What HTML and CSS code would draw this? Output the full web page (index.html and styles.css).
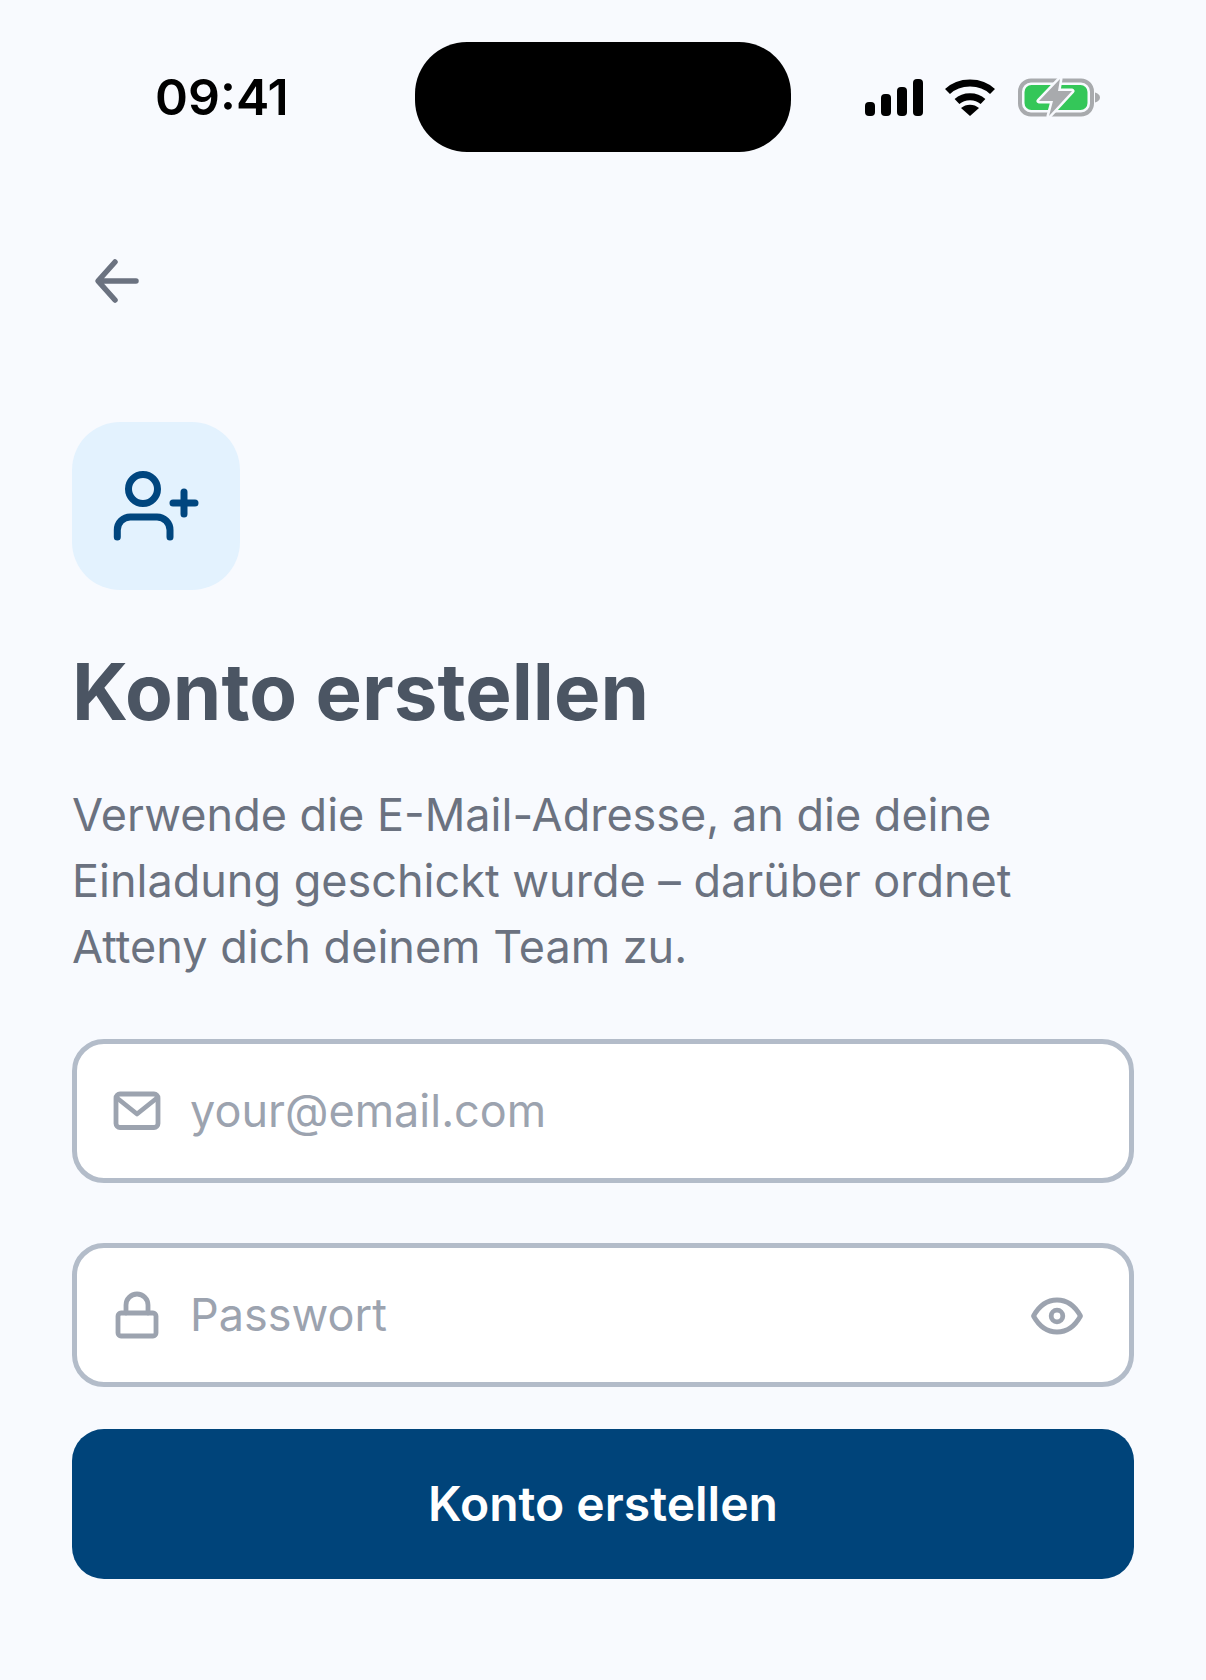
FILE: index.html
```html
<!DOCTYPE html>
<html lang="de">
<head>
    <meta charset="UTF-8">
    <meta name="viewport" content="width=device-width, initial-scale=1.0">
    <title>Konto erstellen</title>
    <link rel="stylesheet" href="styles.css">
</head>
<body>
    <div class="status-bar">
        <div class="time">09:41</div>
        <div class="island"></div>
        <div class="status-icons">
            <svg class="signal" width="58" height="37" viewBox="0 0 58 37">
                <rect x="0" y="23" width="10" height="14" rx="4"/>
                <rect x="16" y="15" width="10" height="22" rx="4"/>
                <rect x="32" y="8" width="10" height="29" rx="4"/>
                <rect x="48" y="0" width="10" height="37" rx="4"/>
            </svg>
            <svg class="wifi" width="50" height="37" viewBox="0 0 50 37">
                <path d="M2.500 12.500C14 1 36 1 47.500 12.500" fill="none" stroke="#000" stroke-width="7"/>
                <path d="M12 22.500C19 16 31 16 38 22.500" fill="none" stroke="#000" stroke-width="7"/>
                <path d="M16 29C21 24.500 29 24.500 34 29L25 37Z"/>
            </svg>
            <svg class="battery" width="82" height="39" viewBox="0 0 82 39">
                <rect x="2" y="2.500" width="72" height="34" rx="11" fill="none" stroke="#a8aaad" stroke-width="4"/>
                <rect x="6.500" y="7" width="63" height="25" rx="7" fill="#34c759"/>
                <path d="M77 14.500C80 15.500 82 17 82 19.500C82 22 80 23.500 77 24.500Z" fill="#a8aaad"/>
                <path d="M42 1L21 23H35L31 38L54 13H40Z" fill="#a8aaad" stroke="#f8fafe" stroke-width="5" stroke-linejoin="round" paint-order="stroke"/>
            </svg>
        </div>
    </div>

    <div class="content">
        <button class="back-button" aria-label="Zurück">
            <svg width="48" height="48" viewBox="0 0 48 48" fill="none" stroke="#6b7280" stroke-width="5.500" stroke-linecap="round" stroke-linejoin="round">
                <path d="M43 25H6M22 6L5 25L22 44"/>
            </svg>
        </button>

        <div class="icon-box">
            <svg width="96" height="96" viewBox="0 0 96 96" fill="none" stroke="#00467f" stroke-width="7" stroke-linecap="round">
                <circle cx="35" cy="31" r="14.500"/>
                <path d="M9.300 79V72A13 13 0 0 1 22.300 59H49A13 13 0 0 1 62 72V79"/>
                <path d="M65 45H87M76 34V56"/>
            </svg>
        </div>

        <h1 class="title">Konto erstellen</h1>
        <p class="subtitle">Verwende die E-Mail-Adresse, an die deine Einladung geschickt wurde – darüber ordnet Atteny dich deinem Team zu.</p>

        <div class="field field-email">
            <svg class="field-icon" width="48" height="48" viewBox="0 0 48 48" fill="none" stroke="#9ca3af" stroke-width="4.800" stroke-linecap="round" stroke-linejoin="round">
                <rect x="3" y="7" width="42" height="33.500" rx="4"/>
                <path d="M4 11L24 27L44 11"/>
            </svg>
            <span class="placeholder">your@email.com</span>
        </div>

        <div class="field field-password">
            <svg class="field-icon" width="48" height="48" viewBox="0 0 48 48" fill="none" stroke="#9ca3af" stroke-width="4.800" stroke-linecap="round" stroke-linejoin="round">
                <rect x="5" y="22" width="38" height="23" rx="3"/>
                <path d="M13 22V14A11 11 0 0 1 35 14V22"/>
            </svg>
            <span class="placeholder">Passwort</span>
            <svg class="eye" width="56" height="56" viewBox="0 0 56 56" fill="none" stroke="#9ca3af" stroke-width="4.800" stroke-linejoin="round">
                <path d="M4.500 28C10 18 18 12 28 12C38 12 46 18 51.500 28C46 38 38 44 28 44C18 44 10 38 4.500 28Z"/>
                <circle cx="28" cy="28" r="5.800"/>
            </svg>
        </div>

        <button class="submit-button">Konto erstellen</button>
    </div>
</body>
</html>
```

FILE: styles.css
```css
* {
    margin: 0;
    padding: 0;
    box-sizing: border-box;
}

body {
    font-family: 'Inter', sans-serif;
    background: #f8fafe;
    height: 1680px;
    overflow: hidden;
}

.status-bar {
    display: grid;
    grid-template-columns: 1fr 376px 1fr;
    align-items: center;
    height: 110px;
    margin-top: 42px;
}

.time {
    padding-left: 155px;
    font-size: 50px;
    font-weight: 600;
    color: #000;
}

.island {
    height: 110px;
    background: #000;
    border-radius: 52px;
}

.status-icons {
    display: flex;
    align-items: center;
    gap: 22px;
    padding-left: 74px;
}

.wifi {
    margin-right: 1px;
}

.content {
    padding: 0 72px;
}

.back-button {
    display: block;
    background: none;
    border: none;
    margin-top: 104px;
    margin-left: 21px;
    height: 48px;
}

.icon-box {
    display: flex;
    align-items: center;
    justify-content: center;
    width: 168px;
    height: 168px;
    margin-top: 118px;
    background: #e3f2fe;
    border-radius: 48px;
}

.title {
    margin-top: 54px;
    font-size: 78px;
    line-height: 96px;
    font-weight: 700;
    color: #4b5563;
}

.subtitle {
    margin-top: 42px;
    font-size: 45px;
    line-height: 66px;
    font-weight: 400;
    color: #6b7280;
}

.field {
    display: flex;
    align-items: center;
    height: 144px;
    padding: 0 44px 0 36px;
    background: #fff;
    border: 5px solid #b3bcc9;
    border-radius: 32px;
}

.field-email {
    margin-top: 59px;
}

.field-password {
    margin-top: 60px;
}

.placeholder {
    margin-left: 29px;
    margin-bottom: 2px;
    font-size: 45px;
    color: #9ca3af;
}

.eye {
    margin-left: auto;
    margin-top: 2px;
}

.submit-button {
    display: block;
    width: 100%;
    height: 150px;
    margin-top: 42px;
    padding-bottom: 2px;
    background: #00447a;
    border: none;
    border-radius: 32px;
    font-family: 'Inter', sans-serif;
    font-size: 48px;
    font-weight: 600;
    color: #fff;
}
```
